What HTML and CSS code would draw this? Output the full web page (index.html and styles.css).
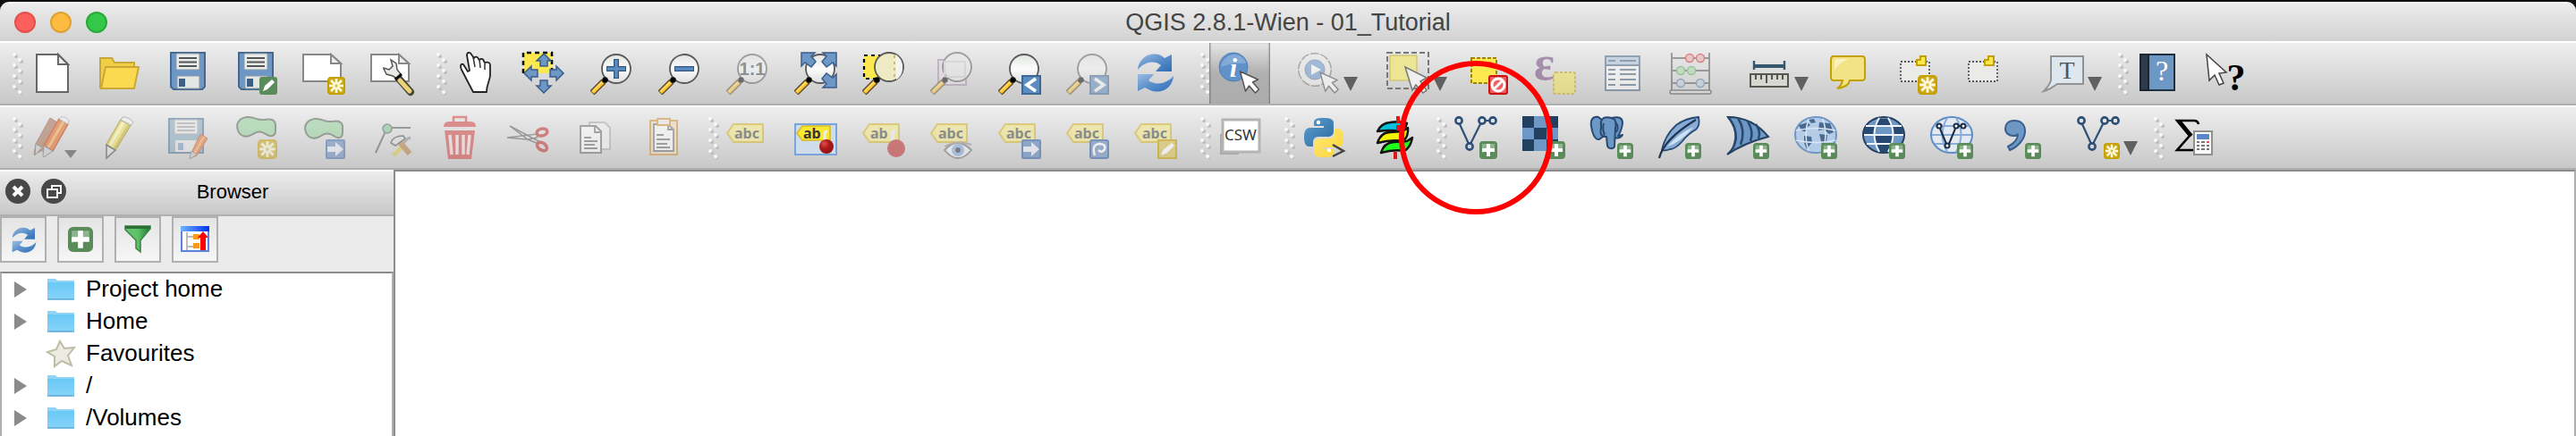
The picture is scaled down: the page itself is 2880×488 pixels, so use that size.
FILE: index.html
```html
<!DOCTYPE html>
<html lang="en">
<head>
<meta charset="utf-8">
<title>QGIS 2.8.1-Wien - 01_Tutorial</title>
<link rel="stylesheet" href="styles.css">
</head>
<body>
<svg class="defs" aria-hidden="true">
  <defs>
    <linearGradient id="gBlue" x1="0" y1="0" x2="1" y2="1"><stop offset="0" stop-color="#9dbce0"/><stop offset=".5" stop-color="#5a8fcb"/><stop offset="1" stop-color="#2f6cb4"/></linearGradient>
    <linearGradient id="gLens" x1="0" y1="0" x2="0" y2="1"><stop offset="0" stop-color="#e2e4e2"/><stop offset=".5" stop-color="#fbfcfb"/><stop offset="1" stop-color="#dedede"/></linearGradient>
    <linearGradient id="gPyB" x1="0" y1="0" x2="1" y2="1"><stop offset="0" stop-color="#5a9fd4"/><stop offset="1" stop-color="#306998"/></linearGradient>
    <linearGradient id="gPyY" x1="0" y1="0" x2="1" y2="1"><stop offset="0" stop-color="#ffe873"/><stop offset="1" stop-color="#ffd43b"/></linearGradient>
    <linearGradient id="gFolder" x1="0" y1="0" x2="0" y2="1"><stop offset="0" stop-color="#69c9f6"/><stop offset="1" stop-color="#86d3f9"/></linearGradient>
    <linearGradient id="gFunnel" x1="0" y1="0" x2="1" y2="0"><stop offset="0" stop-color="#6fbf74"/><stop offset=".5" stop-color="#5cc465"/><stop offset="1" stop-color="#1f7a33"/></linearGradient>
    <linearGradient id="gWin" x1="0" y1="0" x2="1" y2="0"><stop offset="0" stop-color="#6fb4ff"/><stop offset="1" stop-color="#0030f0"/></linearGradient>
    <radialGradient id="gBall" cx=".35" cy=".3" r=".8"><stop offset="0" stop-color="#e05050"/><stop offset=".4" stop-color="#b01c1c"/><stop offset="1" stop-color="#8c1212"/></radialGradient>
  </defs>
  <symbol id="grip" viewBox="0 0 12 48">
    <g fill="#bcbcbc"><circle cx="4" cy="5" r="2"/><circle cx="4" cy="17" r="2"/><circle cx="4" cy="29" r="2"/><circle cx="4" cy="41" r="2"/><circle cx="10" cy="11" r="2"/><circle cx="10" cy="23" r="2"/><circle cx="10" cy="35" r="2"/><circle cx="10" cy="47" r="1"/></g>
    <g fill="#f8f8f8"><circle cx="2" cy="3" r="2"/><circle cx="2" cy="15" r="2"/><circle cx="2" cy="27" r="2"/><circle cx="2" cy="39" r="2"/><circle cx="8" cy="9" r="2"/><circle cx="8" cy="21" r="2"/><circle cx="8" cy="33" r="2"/><circle cx="8" cy="45" r="2"/></g>
  </symbol>
  <symbol id="plus" viewBox="0 0 20 20"><rect x="1" y="1" width="18" height="18" rx="3" fill="#5a8c5a" stroke="#5a8c5a" stroke-width="2"/><path d="M3 3h14v5q-7 1-14 5z" fill="#8fb48f"/><path d="M10 3v14M3 10h14" stroke="#fff" stroke-width="4"/></symbol>
  <symbol id="star" viewBox="0 0 20 20"><rect x="1" y="1" width="18" height="18" rx="3" fill="#cfab1c" stroke="#c4a000" stroke-width="2"/><path d="M10 2v16M2 10h16M4 4l12 12M16 4L4 16" stroke="#fffbe0" stroke-width="2.6"/><circle cx="10" cy="10" r="3.6" fill="#fff8d0"/><circle cx="10" cy="10" r="1.6" fill="#d8b83a"/></symbol>
  <symbol id="go" viewBox="0 0 22 22"><rect x="1" y="1" width="20" height="20" rx="1" fill="#5f86bc" stroke="#3c64a4" stroke-width="2"/><path d="M2 8h9V3l9 8-9 8v-5H2z" fill="#fff" opacity=".85"/></symbol>
  <symbol id="disk" viewBox="0 0 48 48"><path d="M5 1h38v38l-3 3H8l-3-3z" fill="#6d97c4" stroke="#46688f" stroke-width="2"/><path d="M11 2h26v18H11z" fill="#e9ecea" stroke="#8c99a6" stroke-width="1"/><path d="M14 7h20M14 11.500h20M14 16h20" stroke="#555" stroke-width="2"/><path d="M12 27h25v14H12z" fill="#e4e6e4" stroke="#8c99a6" stroke-width="1"/><path d="M14 30h7v9h-7z" fill="#3d5f86"/></symbol>
  <symbol id="handle" viewBox="0 0 48 48"><path d="M2 46L15 33" stroke="#55482a" stroke-width="7"/><path d="M2.500 45.500L14 34" stroke="#fbc02d" stroke-width="4.500"/><path d="M3 44L13 34" stroke="#ffe27a" stroke-width="1.200"/><circle cx="16.500" cy="31.500" r="3.200" fill="#000"/></symbol>
  <symbol id="lens" viewBox="0 0 48 48"><circle cx="29" cy="19" r="16" fill="url(#gLens)" stroke="#5a5a5a" stroke-width="1.800"/><use href="#handle"/></symbol>
  <symbol id="cursor" viewBox="0 0 24 26"><path d="M1 1l20 9-6 3 7 8-4 4-7-8-4 6z" fill="#fff" stroke="#555" stroke-width="1.500" stroke-linejoin="round"/></symbol>
  <symbol id="tag" viewBox="0 0 48 48"><path d="M8 9h33v20H8L1 19z" fill="#f4e98c" stroke="#d6ba38" stroke-width="2"/></symbol>
  <symbol id="sync" viewBox="0 0 48 48"><path d="M4 20C5 7 17-1 30 4l4 3 8-4v19H24l6-7C22 9 12 11 4 20z" fill="url(#gBlue)"/><path d="M44 27C43 40 31 48 18 43l-6-3-8 4V25h18l-6 7c8 6 20 4 28-5z" fill="url(#gBlue)"/></symbol>
  <symbol id="vee" viewBox="0 0 48 48"><g fill="none" stroke="#2e5078" stroke-width="2.600"><path d="M6 9l10 22M18 31L29 9M34 5h6" stroke-width="2.200"/><circle cx="5" cy="5" r="3.600"/><circle cx="31" cy="5" r="3.600"/><circle cx="43" cy="5" r="3.600"/><circle cx="17" cy="34" r="3.600"/></g></symbol>
  <symbol id="arrows" viewBox="0 0 48 48"><g fill="#6d97c4" stroke="#3a5e8c" stroke-width="1.500"><path d="M1 1h15l-4 4 5 6-5 6-7-5-4 4z"/></g></symbol>
  <symbol id="folder" viewBox="0 0 32 26"><path d="M1 1h9l2 2h19v21H1z" fill="#8fd3f5"/><path d="M1 5h30v19H1z" fill="url(#gFolder)"/><path d="M1 24h30" stroke="#58a9d2" stroke-width="1.500"/></symbol>
</svg>

<header class="titlebar">
  <div class="lights">
    <button class="light red" aria-label="Close"></button>
    <button class="light amber" aria-label="Minimise"></button>
    <button class="light green" aria-label="Zoom window"></button>
  </div>
  <h1>QGIS 2.8.1-Wien - 01_Tutorial</h1>
</header>

<nav class="bar" aria-label="Main toolbars">
  <div class="group">
    <svg class="grip" aria-hidden="true"><use href="#grip"/></svg>
    <button class="tool" aria-label="New project"><svg viewBox="0 0 48 48"><path d="M7 3h24l11 11v31H7z" fill="#fff" stroke="#666" stroke-width="2"/><path d="M31 3v11h11z" fill="#eee" stroke="#666" stroke-width="2"/></svg></button>
    <button class="tool" aria-label="Open project"><svg viewBox="0 0 48 48"><path d="M2 41V7h13l3 5h22v8" fill="#f0cf45" stroke="#c9a838" stroke-width="2"/><path d="M8 17h37l-5 24H3z" fill="#fbd950" stroke="#c9a838" stroke-width="2"/></svg></button>
    <button class="tool" aria-label="Save project"><svg viewBox="0 0 48 48"><use href="#disk"/></svg></button>
    <button class="tool" aria-label="Save project as"><svg viewBox="0 0 48 48"><use href="#disk"/><rect x="28" y="28" width="20" height="20" rx="3" fill="#5a8c5a"/><path d="M32 44l2-6 8-7 3 3-8 8z" fill="#fff"/></svg></button>
    <button class="tool" aria-label="New print composer"><svg viewBox="0 0 48 48"><path d="M1 3h31l11 10v20H1z" fill="#fff" stroke="#888" stroke-width="2"/><path d="M32 3v10h11z" fill="#eee" stroke="#888" stroke-width="2"/><use href="#star" x="28" y="28" width="20" height="20"/></svg></button>
    <button class="tool" aria-label="Composer manager"><svg viewBox="0 0 48 48"><path d="M1 3h31l11 10v20H1z" fill="#fff" stroke="#888" stroke-width="2"/><path d="M32 3v10h11z" fill="#eee" stroke="#888" stroke-width="2"/><path d="M31 29L45 45" stroke="#4a4636" stroke-width="8" stroke-linecap="round"/><path d="M33 32L44 44" stroke="#ecd27a" stroke-width="5" stroke-linecap="round"/><path d="M15 19l3 6 7 2 5 3 4-5-4-5-1-7-6-4 2 7-4 4-6-2z" fill="#e8ebe8" stroke="#555" stroke-width="1.500"/><path d="M28 31l7-6" stroke="#111" stroke-width="3"/></svg></button>
  </div>
  <div class="group">
    <svg class="grip" aria-hidden="true"><use href="#grip"/></svg>
    <button class="tool" aria-label="Pan map"><svg viewBox="-2 0 48 48"><path d="M19 45L6 20c-2-4-1-7 2-6l5 8 2-1-3-17c0-4 4-4 5-1l3 4c1-2 4-2 5 1l1 1c2-2 5-1 5 2l2 1c2-1 5 0 5 3v11c0 6-4 10-4 19z" fill="#fff" stroke="#222" stroke-width="1.800" stroke-linejoin="round"/><path d="M19 6l2 11M26 8l1 10M32 11v9" stroke="#333" stroke-width="1.500" fill="none"/></svg></button>
    <button class="tool" aria-label="Pan map to selection"><svg viewBox="0 0 48 48"><path d="M1 1h32v23H1z" fill="#fce94f"/><path d="M1 24V1h32v22" fill="none" stroke="#000" stroke-width="2.500" stroke-dasharray="5 4"/><path d="M24 2l8 8h-4v6h-8v-6h-4zM24 46l-8-8h4v-6h8v6h4zM2 24l8-8v4h7v8h-7v4zM46 24l-8-8v4h-7v8h7v4z" fill="#6d97c4" stroke="#3a5e8c" stroke-width="1.500"/></svg></button>
    <button class="tool" aria-label="Zoom in"><svg viewBox="0 0 48 48"><use href="#lens"/><path d="M29 8v22M18 19h22" stroke="#2f5580" stroke-width="6"/><path d="M29 9v20M19 19h20" stroke="#5d8cc0" stroke-width="3.500"/></svg></button>
    <button class="tool" aria-label="Zoom out"><svg viewBox="0 0 48 48"><use href="#lens"/><path d="M18 19h22" stroke="#2f5580" stroke-width="6"/><path d="M19 19h20" stroke="#5d8cc0" stroke-width="3.500"/></svg></button>
    <button class="tool off" aria-label="Zoom to native resolution" disabled><svg viewBox="0 0 48 48"><use href="#lens"/><text class="ratio" x="29" y="26" text-anchor="middle">1:1</text></svg></button>
    <button class="tool" aria-label="Zoom full"><svg viewBox="0 0 48 48"><use href="#lens"/><use href="#arrows" x="7"/><use href="#arrows" transform="matrix(-1 0 0 1 48 0)"/><use href="#arrows" transform="matrix(-1 0 0 -1 48 41)"/></svg></button>
    <button class="tool" aria-label="Zoom to selection"><svg viewBox="0 0 48 48"><path d="M2 4h34v26H2z" fill="#fce94f"/><path d="M2 4h34v26H2z" fill="none" stroke="#000" stroke-width="2.200" stroke-dasharray="4 4"/><circle cx="30" cy="17" r="16" fill="#eeeac4" stroke="#5a5a5a" stroke-width="1.800"/><path d="M36 4v26" stroke="#c8bd70" stroke-width="2" stroke-dasharray="3 4"/><path d="M37 3c10 5 11 23 1 28z" fill="#f3f4f2"/><use href="#handle"/></svg></button>
    <button class="tool off" aria-label="Zoom to layer" disabled><svg viewBox="0 0 48 48"><path d="M9 9h31v28H9z" fill="#e4dbe4" stroke="#a08ca8" stroke-width="2"/><circle cx="30" cy="17" r="16" fill="#e9e9e9" stroke="#5a5a5a" stroke-width="1.800"/><path d="M16 11h23v17H16z" fill="none" stroke="#ccc" stroke-width="2"/><use href="#handle"/></svg></button>
    <button class="tool" aria-label="Zoom last"><svg viewBox="0 0 48 48"><use href="#lens"/><rect x="27" y="27" width="20" height="20" fill="#5d8cc0" stroke="#3f6794" stroke-width="2"/><path d="M42 30l-10 7 10 7" fill="none" stroke="#fff" stroke-width="3.500"/></svg></button>
    <button class="tool off" aria-label="Zoom next" disabled><svg viewBox="0 0 48 48"><use href="#lens"/><rect x="27" y="27" width="20" height="20" fill="#5d8cc0" stroke="#3f6794" stroke-width="2"/><path d="M32 30l10 7-10 7" fill="none" stroke="#fff" stroke-width="3.500"/></svg></button>
    <button class="tool" aria-label="Refresh"><svg viewBox="0 0 48 48"><use href="#sync"/></svg></button>
  </div>
  <div class="group">
    <svg class="grip" aria-hidden="true"><use href="#grip"/></svg>
    <button class="tool pressed" aria-label="Identify features" aria-pressed="true"><svg viewBox="0 0 48 48"><circle cx="17" cy="17" r="16" fill="#6091c8" stroke="#4c7eb8"/><path d="M3 17C4 8 12 3 18 3s13 5 13 10c-10-1-19 0-28 4z" fill="#84abd8"/><text class="info" x="17" y="28" text-anchor="middle">i</text><use href="#cursor" x="23" y="21" width="25" height="26"/></svg></button>
    <button class="tool menu" aria-label="Run feature action"><svg class="faded" viewBox="0 0 48 48"><circle cx="20" cy="20" r="17" fill="#f0f0f0" stroke="#777" stroke-width="4" stroke-dasharray="9 1.700"/><circle cx="20" cy="20" r="17.500" fill="#ececec"/><circle cx="20" cy="20" r="11" fill="#6d9bd2" stroke="#5a7ba0"/><path d="M16 14l11 6-11 6z" fill="#fff"/><use href="#cursor" x="25" y="22" width="23" height="25"/></svg><span class="caret"></span></button>
    <button class="tool menu" aria-label="Select features"><svg viewBox="0 0 48 48"><path d="M4 4h30v28H4z" fill="#ede596" stroke="#c9b94c"/><path d="M1 1h46v40H1z" fill="none" stroke="#777" stroke-width="2" stroke-dasharray="6 3"/><path d="M21 17l24 12-7 4 7 10-4 3-8-9-4 6z" fill="#efefef" stroke="#777" stroke-width="1.500"/></svg><span class="caret"></span></button>
    <button class="tool" aria-label="Deselect features"><svg viewBox="0 0 48 48"><path d="M7 7h28v28H7z" fill="#fce94f" stroke="#a08500" stroke-width="2" stroke-dasharray="4 2"/><rect x="27" y="27" width="20" height="20" rx="2" fill="#ef6060" stroke="#cc1111" stroke-width="2"/><circle cx="37" cy="37" r="7" fill="none" stroke="#fff" stroke-width="3"/><path d="M32 42l10-10" stroke="#fff" stroke-width="3"/></svg></button>
    <button class="tool off" aria-label="Select by expression" disabled><svg viewBox="0 0 48 48"><text class="eps" x="1" y="31">ε</text><rect x="23" y="23" width="24" height="24" rx="2" fill="#f5e54e" stroke="#c4a000" stroke-width="2" stroke-dasharray="3 2"/></svg></button>
    <button class="tool off" aria-label="Open attribute table" disabled><svg viewBox="0 0 48 48"><path d="M5 5h38v38H5z" fill="#fff" stroke="#42607c" stroke-width="2"/><path d="M5 5h38v10H5z" fill="#aac4e0" stroke="#42607c" stroke-width="2"/><path d="M8 10h8M21 10h18M8 20h8M21 20h18M8 25h8M21 25h18M8 31h8M21 31h18M8 37h8M21 37h18" stroke="#42607c" stroke-width="2"/></svg></button>
    <button class="tool off" aria-label="Field calculator" disabled><svg viewBox="0 0 48 48"><path d="M3 1v42M45 1v42M3 7h42M3 21h42M3 35h42" stroke="#555" stroke-width="2"/><rect x="1" y="43" width="46" height="4" rx="2" fill="#ddd" stroke="#444" stroke-width="1.500"/><g stroke-width="1.500"><g fill="#eaa" stroke="#c22"><circle cx="23" cy="7" r="4.500"/><circle cx="35" cy="7" r="4.500"/></g><g fill="#ada" stroke="#5a5"><circle cx="13" cy="21" r="4.500"/><circle cx="25" cy="21" r="4.500"/></g><g fill="#bcd" stroke="#579"><circle cx="13" cy="35" r="4.500"/><circle cx="35" cy="35" r="4.500"/></g></g></svg></button>
    <button class="tool menu" aria-label="Measure"><svg viewBox="0 0 48 48"><path d="M7 16h34M7 10v10M41 10v10" stroke="#36566e" stroke-width="2.400"/><path d="M7 16h34" stroke="#36566e" stroke-width="4"/><rect x="3" y="25" width="42" height="14" fill="#d6d8d0" stroke="#565850" stroke-width="2"/><path d="M9 26v5M15 26v5M21 26v9M27 26v5M33 26v5M39 26v5" stroke="#444" stroke-width="1.800"/></svg><span class="caret"></span></button>
    <button class="tool" aria-label="Map tips"><svg viewBox="0 0 48 48"><path d="M8 5h32q3 0 3 4v19q0 4-3 4H26q-1 7-14 9 5-3 6-9H8q-3 0-3-4V9q0-4 3-4z" fill="#f2e486" stroke="#c4a000" stroke-width="2"/><path d="M9 20V10q0-2 4-2h12q-10 3-16 12z" fill="#faf3c0"/></svg></button>
    <button class="tool" aria-label="New bookmark"><svg viewBox="0 0 48 48"><path d="M7 11h32v22H7z" fill="#eaeae8" stroke="#555" stroke-width="1.800" stroke-dasharray="2 2"/><path d="M29 5h6v10H25V9h4z" fill="#fce94f" stroke="#c4a000" stroke-width="2"/><use href="#star" x="26" y="26" width="22" height="22"/></svg></button>
    <button class="tool" aria-label="Show bookmarks"><svg viewBox="0 0 48 48"><path d="M7 11h32v22H7z" fill="#eaeae8" stroke="#555" stroke-width="1.800" stroke-dasharray="2 2"/><path d="M29 5h6v10H25V9h4z" fill="#fce94f" stroke="#c4a000" stroke-width="2"/></svg></button>
    <button class="tool menu" aria-label="Text annotation"><svg viewBox="0 0 48 48"><path d="M11 5h36v31H18Q10 42 3 44q6-6 8-12z" fill="#dfe7ee" stroke="#929292" stroke-width="2"/><text class="anno" x="29" y="30" text-anchor="middle">T</text></svg><span class="caret"></span></button>
  </div>
  <div class="group">
    <svg class="grip" aria-hidden="true"><use href="#grip"/></svg>
    <button class="tool" aria-label="Help contents"><svg viewBox="0 0 48 48"><path d="M5 3h38v40H5z" fill="#6d97c4" stroke="#1f2f42" stroke-width="2"/><path d="M5 3h9v40H5z" fill="#2d3c4c" stroke="#1f2530" stroke-width="2"/><text class="help" x="29" y="32" text-anchor="middle">?</text></svg></button>
    <button class="tool" aria-label="What's this"><svg viewBox="0 0 48 48"><path d="M3 3l22 20-8 1 5 11-5 2-5-11-6 6z" fill="#fff" stroke="#444" stroke-width="1.500"/><text class="what" x="36" y="43" text-anchor="middle">?</text></svg></button>
  </div>
</nav>

<nav class="bar" aria-label="Editing and layer toolbars">
  <div class="group">
    <svg class="grip" aria-hidden="true"><use href="#grip"/></svg>
    <button class="tool dim" aria-label="Current edits" disabled><svg viewBox="0 0 48 48"><path d="M22 2l8 5L14 38 4 43l2-12z" fill="#b07a60" stroke="#8a6a60"/><path d="M32 3l10 6-17 30-10-6z" fill="#e87030" stroke="#b84818" stroke-width="1.500"/><path d="M37 6L20 35" stroke="#f0b060" stroke-width="3"/><path d="M32 3l2-2q6-1 9 4l-1 4z" fill="#eee" stroke="#aaa"/><path d="M15 33l10 6-10 7-1-2zM6 31l7 4-8 9z" fill="#ccc" stroke="#777"/><path d="M38 38h14l-7 9z" fill="#555"/></svg></button>
    <button class="tool dim" aria-label="Toggle editing" disabled><svg viewBox="0 0 48 48"><path d="M25 4l11 6-17 28-10-6z" fill="#f0e060" stroke="#a89830" stroke-width="1.500"/><path d="M28 7L13 33" stroke="#fdf8c0" stroke-width="3"/><path d="M34 9L18 36" stroke="#c8b838" stroke-width="2"/><path d="M25 4l2-3q8 0 12 6l-3 3z" fill="#f4f4f4" stroke="#999"/><path d="M9 32l10 6-10 9z" fill="#ddd" stroke="#555" stroke-width="1.500"/></svg></button>
    <button class="tool off" aria-label="Save layer edits" disabled><svg viewBox="0 0 48 48"><path d="M3 3h38v38H3z" fill="#80a8c0" stroke="#46688f" stroke-width="2"/><path d="M9 4h26v16H9z" fill="#e9ecea" stroke="#999"/><path d="M12 8h20M12 12h20M12 16h20" stroke="#888" stroke-width="1.500"/><path d="M10 27h24v13H10z" fill="#e4e6e4"/><path d="M13 30h6v8h-6z" fill="#6d97c4"/><path d="M38 20l8 5-12 19-7 3 2-8z" fill="#e87030" stroke="#b84818"/><path d="M42 23L31 42" stroke="#f0b060" stroke-width="2"/><path d="M28 39l6 4-8 5z" fill="#ccc" stroke="#777"/></svg></button>
    <button class="tool off" aria-label="Add feature" disabled><svg viewBox="0 0 48 48"><path d="M14 1C22 0 25 5 32 4c4 0 7-1 10 0 5 2 4 6 4 12 0 8-7 7-11 4-6-4-10-3-14 0-6 4-14 4-17-4C1 8 6 2 14 1z" fill="#92d49a" stroke="#4c5c4c" stroke-width="2"/><use href="#star" x="26" y="26" width="22" height="22"/></svg></button>
    <button class="tool off" aria-label="Move feature" disabled><svg viewBox="0 0 48 48"><path d="M14 3c8-1 11 4 18 3 4 0 6-1 9 0 5 2 4 6 4 12 0 8-6 7-10 4-6-4-10-3-14 0-6 4-14 4-17-4C1 10 6 4 14 3z" fill="#92d49a" stroke="#4c5c4c" stroke-width="2"/><use href="#go" x="26" y="26" width="22" height="22"/></svg></button>
    <button class="tool off" aria-label="Node tool" disabled><svg viewBox="0 0 48 48"><path d="M24 13h21M17 17L6 41" stroke="#555" stroke-width="2"/><circle cx="19" cy="14" r="5" fill="#7cc48c" stroke="#555" stroke-width="1.500"/><path d="M26 44L36 34" stroke="#d8c840" stroke-width="5"/><path d="M34 33l4-4 4-4 3-1" fill="none" stroke="#888" stroke-width="3"/><path d="M32 28L44 42" stroke="#b87830" stroke-width="6"/><path d="M23 30q2-8 14-8l2 3-11 8z" fill="#ddd" stroke="#444" stroke-width="1.500"/></svg></button>
    <button class="tool off" aria-label="Delete selected" disabled><svg viewBox="0 0 48 48"><path d="M17 6V1h14v5" fill="none" stroke="#d23a3a" stroke-width="2.500"/><path d="M6 12q0-6 6-6h24q6 0 6 6zM7 16h34l-4 32H11z" fill="#d23a3a"/><path d="M13 21l2 22M21 21v22M28 21v22M35 21l-2 22" stroke="#f4dcdc" stroke-width="3.500"/></svg></button>
    <button class="tool off" aria-label="Cut features" disabled><svg viewBox="0 0 48 48"><path d="M4 11l32 17-2 2-10-4zM1 24l34-4-1 4-10 2z" fill="#eee" stroke="#555" stroke-width="1.500"/><g fill="none" stroke="#c02020" stroke-width="3.500"><ellipse cx="40" cy="18" rx="6" ry="4" transform="rotate(-12 40 18)"/><ellipse cx="40" cy="34" rx="6" ry="4" transform="rotate(35 40 34)"/></g></svg></button>
    <button class="tool off" aria-label="Copy features" disabled><svg viewBox="0 0 48 48"><path d="M17 7h17l6 6v24H17z" fill="#f4f4f4" stroke="#aaa" stroke-width="2"/><path d="M7 11h17l6 6v24H7z" fill="#fff" stroke="#666" stroke-width="2"/><path d="M23 11v7h7M11 24h8M11 28h15M11 32h12M11 36h15" fill="none" stroke="#666" stroke-width="1.800"/></svg></button>
    <button class="tool off" aria-label="Paste features" disabled><svg viewBox="0 0 48 48"><path d="M9 5h30v38H9z" fill="#f0dcc0" stroke="#d08c28" stroke-width="2"/><path d="M13 9h16l6 6v24H13z" fill="#fff" stroke="#666" stroke-width="1.800"/><path d="M29 9v6h6M16 21h8M16 26h15M16 31h12M16 35h15" fill="none" stroke="#666" stroke-width="1.800"/><path d="M17 3h14v7H17z" fill="#eee" stroke="#d08c28" stroke-width="2"/></svg></button>
  </div>
  <div class="group">
    <svg class="grip" aria-hidden="true"><use href="#grip"/></svg>
    <button class="tool dim" aria-label="Layer labeling options"><svg viewBox="0 0 48 48"><use href="#tag"/><text class="abc" x="9" y="25">abc</text></svg></button>
    <button class="tool" aria-label="Highlight pinned labels"><svg viewBox="0 0 48 48"><path d="M1 9h46v34H1z" fill="#cfdcea" stroke="#7aa5dc" stroke-width="2"/><path d="M9 11h31v16H9l-6-8z" fill="#fbe832" stroke="#d6ba20" stroke-width="1.500"/><text class="abc strong" x="10" y="25">ab</text><path d="M34 28v-8q0-3 3-3" fill="none" stroke="#eee" stroke-width="3"/><circle cx="36" cy="34" r="8" fill="url(#gBall)"/></svg></button>
    <button class="tool dim" aria-label="Pin labels"><svg viewBox="0 0 48 48"><use href="#tag"/><text class="abc" x="9" y="25">ab</text><path d="M34 28v-8q0-3 3-3" fill="none" stroke="#eee" stroke-width="4"/><circle cx="38" cy="36" r="10" fill="#c03a3a"/></svg></button>
    <button class="tool dim" aria-label="Show hidden labels"><svg viewBox="0 0 48 48"><use href="#tag"/><text class="abc" x="9" y="25">abc</text><path d="M16 38q14-16 30 0-15 18-30 0z" fill="#eee" stroke="#777" stroke-width="1.800"/><path d="M16 34q14-8 30-2" fill="none" stroke="#999" stroke-width="2"/><circle cx="31" cy="38" r="7" fill="#8ab0e0"/><circle cx="31" cy="38" r="3" fill="#445"/></svg></button>
    <button class="tool dim" aria-label="Move label"><svg viewBox="0 0 48 48"><use href="#tag"/><text class="abc" x="9" y="25">abc</text><use href="#go" x="26" y="26" width="22" height="22"/></svg></button>
    <button class="tool dim" aria-label="Rotate label"><svg viewBox="0 0 48 48"><use href="#tag"/><text class="abc" x="9" y="25">abc</text><rect x="27" y="27" width="20" height="20" rx="2" fill="#6f91c2" stroke="#3c64a4" stroke-width="2"/><path d="M32 44q-4-12 5-13 8 0 6 6-3 5-7 1" fill="none" stroke="#fff" stroke-width="2.500"/></svg></button>
    <button class="tool dim" aria-label="Change label"><svg viewBox="0 0 48 48"><use href="#tag"/><text class="abc" x="9" y="25">abc</text><rect x="27" y="27" width="20" height="20" fill="#dcc458" stroke="#c4a000" stroke-width="2"/><path d="M30 44l2-6 10-8 3 3-8 8z" fill="#fff"/></svg></button>
  </div>
  <div class="group">
    <svg class="grip" aria-hidden="true"><use href="#grip"/></svg>
    <button class="tool" aria-label="Metasearch catalogue"><svg viewBox="0 0 48 48"><path d="M3 20v22h20" fill="none" stroke="#aaa" stroke-width="2"/><path d="M5 4h41v36H5z" fill="#fff" stroke="#b4b4b4" stroke-width="3"/><text class="csw" x="25" y="27" text-anchor="middle">CSW</text></svg></button>
  </div>
  <div class="group">
    <svg class="grip" aria-hidden="true"><use href="#grip"/></svg>
    <button class="tool" aria-label="Python console"><svg viewBox="0 0 48 48"><path d="M23 2c8 0 12 1 12 6v9c0 4-3 6-7 6H18c-4 0-6 3-6 6v5H8c-5 0-6-5-6-11s2-10 7-10h15v-2H13V7c0-4 4-5 10-5z" fill="url(#gPyB)"/><path d="M25 46c-8 0-12-1-12-6v-9c0-4 3-6 7-6h10c4 0 6-3 6-6v-5h4c5 0 6 5 6 11s-2 10-7 10H24v2h11v4c0 4-4 5-10 5z" fill="url(#gPyY)"/><circle cx="18" cy="7" r="2.200" fill="#fff"/><circle cx="30" cy="38" r="2.200" fill="#fff"/><path d="M34 32l12 7-12 6" fill="none" stroke="#444" stroke-width="2.500"/></svg></button>
    <button class="tool" aria-label="OpenLayers plugin"><svg viewBox="0 0 48 48"><path d="M28 40v8" stroke="#e01818" stroke-width="4"/><g stroke="#111" stroke-width="2.500" stroke-linejoin="round"><path d="M12 41q3-11 14-12l15-1 6-4q-2 11-9 15-12-2-26 2z" fill="#1aff1a"/><path d="M8 30q4-12 14-12l14-1 6-4q1 9-5 15-14-2-29 2z" fill="#f4f400"/><path d="M8 17Q12 8 22 7q12-2 19 1-2 7-7 9-12-2-26 0z" fill="#00c0dc"/></g><path d="M31 0v8M31 10v6" stroke="#e01818" stroke-width="4"/></svg></button>
  </div>
  <div class="group">
    <svg class="grip" aria-hidden="true"><use href="#grip"/></svg>
    <button class="tool ringed" aria-label="Add vector layer"><svg viewBox="0 0 48 48"><use href="#vee"/><use href="#plus" x="28" y="28" width="20" height="20"/></svg></button>
    <button class="tool" aria-label="Add raster layer"><svg viewBox="0 0 48 48"><path d="M0 0h40v39H0z" fill="#6d97c4"/><path d="M0 0h13v13H0zM27 0h13v13H27zM13 13h14v13H13zM0 26h13v13H0zM27 26h13v13H27z" fill="#22405f"/><use href="#plus" x="28" y="28" width="20" height="20"/></svg></button>
    <button class="tool" aria-label="Add PostGIS layer"><svg viewBox="0 0 48 48"><g fill="#6d97c4" stroke="#284a72" stroke-width="2" stroke-linejoin="round"><path d="M24 2q12-3 12 6-1 8-5 14l5-1q-3 5-9 3z"/><path d="M9 1C2 0 0 5 1 11c1 8 4 16 9 15l4-3V5z"/><path d="M15 2q5-2 11 1c3 2 3 6 2 10l-1 21c-1 3-7 3-8-1l-1-10c-7 0-7-4-6-10 0-5-1-8 3-11z"/><path d="M15 8q-2 6 1 13M28 7q5 5 1 11" fill="none"/></g><use href="#plus" x="30" y="30" width="18" height="18"/></svg></button>
    <button class="tool" aria-label="Add SpatiaLite layer"><svg viewBox="0 0 48 48"><path d="M4 38Q7 22 20 10 31 2 45 1q2 10-3 14-9 5-15 13-8 9-14 9-4 2-9 1z" fill="#85abd6" stroke="#284a72" stroke-width="1.800"/><path d="M10 34q14-4 30-22-16 6-30 22z" fill="#cfe0f2"/><path d="M1 47Q6 26 42 4" fill="none" stroke="#203450" stroke-width="2.200"/><use href="#plus" x="30" y="30" width="18" height="18"/></svg></button>
    <button class="tool" aria-label="Add MSSQL layer"><svg viewBox="0 0 48 48"><path d="M2 1q27 0 45 22Q20 30 1 43q9-8 10-18Q11 12 2 1z" fill="#6d97c4" stroke="#22405f" stroke-width="2"/><path d="M13 2q9 14 3 30M24 6q7 11 3 22M33 9q6 8 3 16M2 1q14 16 5 36" fill="none" stroke="#284a72" stroke-width="2.500"/><use href="#plus" x="30" y="30" width="18" height="18"/></svg></button>
    <button class="tool" aria-label="Add WMS layer"><svg viewBox="0 0 48 48"><ellipse cx="24" cy="21" rx="23" ry="20" fill="#b4cce8" stroke="#6d97c4" stroke-width="2"/><path d="M5 10l10-3 3 3-5 3 1 5-6-2zM28 7l12 1 4 10-5 2-6-5-6 1zM11 22l8 1 1 6-6 8-3-7zM28 20l9 1-1 8-5 3zM16 4l6-1 2 4-5 1z" fill="#284a72" opacity=".75"/><path d="M2 16q22-5 44 0M2 27q22 5 44 0M16 3q-6 18 0 36M32 3q6 18 0 36" fill="none" stroke="#dbe7f5" stroke-width="1.500"/><use href="#plus" x="30" y="30" width="18" height="18"/></svg></button>
    <button class="tool" aria-label="Add WCS layer"><svg viewBox="0 0 48 48"><ellipse cx="24" cy="21" rx="23" ry="20" fill="#6d97c4" stroke="#22405f" stroke-width="2"/><path d="M18 3h12l4 7H14zM2 20q0-6 3-9h9v9zM14 21h20v9H14zM34 11h9q3 4 3 9H34zM16 31h16l-3 9H19z" fill="#284a72"/><path d="M14 11h20v9H14z" fill="#6d97c4"/><path d="M4 11h40M2 21h44M5 31h38M19 2Q8 20 19 40M29 2q11 18 0 38" fill="none" stroke="#f0f5fb" stroke-width="2"/><use href="#plus" x="30" y="30" width="18" height="18"/></svg></button>
    <button class="tool" aria-label="Add WFS layer"><svg viewBox="0 0 48 48"><ellipse cx="24" cy="21" rx="23" ry="20" fill="#e4eaf2" stroke="#5d8cc8" stroke-width="2"/><path d="M4 11h40M2 21h44M5 31h38M19 2Q8 20 19 40M29 2q11 18 0 38" fill="none" stroke="#88abd8" stroke-width="2"/><g fill="#fff" stroke="#1a2c44" stroke-width="2"><path d="M11 14l7 17M21 31l7-17M31 11h4"/><circle cx="10" cy="11" r="2.500"/><circle cx="29" cy="11" r="2.500"/><circle cx="37" cy="11" r="2.500"/><circle cx="19" cy="33" r="2.500"/></g><use href="#plus" x="30" y="30" width="18" height="18"/></svg></button>
    <button class="tool" aria-label="Add delimited text layer"><svg viewBox="0 0 48 48"><path d="M18 5C11 5 8 9 8 14c0 5 4 8 9 8 2 0 4 0 5-2 0 6-5 11-11 14l2 4C21 35 30 26 30 17 30 9 25 5 18 5z" fill="#6d97c4" stroke="#3a5e8c" stroke-width="2"/><use href="#plus" x="30" y="30" width="18" height="18"/></svg></button>
    <button class="tool menu" aria-label="New vector layer"><svg viewBox="0 0 48 48"><use href="#vee"/><use href="#star" x="30" y="30" width="18" height="18"/></svg><span class="caret"></span></button>
  </div>
  <div class="group">
    <svg class="grip" aria-hidden="true"><use href="#grip"/></svg>
    <button class="tool" aria-label="Statistics panel"><svg viewBox="0 0 48 48"><path d="M30 9q-1-4-5-4H6l14 17L6 38h18" fill="none" stroke="#000" stroke-width="2.600"/><path d="M8 5l14 17" stroke="#000" stroke-width="4"/><rect x="25" y="17" width="20" height="26" fill="#fafafa" stroke="#909090" stroke-width="2"/><path d="M28 20h14v6H28z" fill="#5b86cc"/><path d="M28 29h3M33 29h4M28 33h3M33 33h4M39 33h3M28 37h3M33 37h4M39 37h3" stroke="#777" stroke-width="2"/><path d="M39 29h3" stroke="#f44" stroke-width="2"/></svg></button>
  </div>
</nav>

<main class="work">
  <aside class="panel">
    <div class="panel-head">
      <button class="round" aria-label="Close panel"><svg viewBox="0 0 28 28"><circle cx="14" cy="14" r="14" fill="#484848"/><path d="M9 9l10 10M19 9L9 19" stroke="#fff" stroke-width="4"/></svg></button>
      <button class="round" aria-label="Float panel"><svg viewBox="0 0 28 28"><circle cx="14" cy="14" r="14" fill="#484848"/><path d="M12 11V8h10v8h-3" fill="none" stroke="#fff" stroke-width="2"/><path d="M7 12h11v9H7z" fill="#484848" stroke="#fff" stroke-width="2"/></svg></button>
      <h2>Browser</h2>
    </div>
    <div class="panel-tools">
      <button class="small" aria-label="Refresh browser"><svg viewBox="0 0 32 32"><use href="#sync" x="1" y="1" width="32" height="32"/></svg></button>
      <button class="small" aria-label="Add selected layers"><svg viewBox="0 0 32 32"><use href="#plus" x="2" y="2" width="28" height="28"/></svg></button>
      <button class="small" aria-label="Filter browser"><svg viewBox="0 0 32 32"><path d="M2 1h28v3L19 17v13l-5-4v-9L2 5z" fill="url(#gFunnel)" stroke="#3f8048" stroke-width="1.500"/><path d="M2 1h28v3H2z" fill="#2f7038"/></svg></button>
      <button class="small" aria-label="Collapse all"><svg viewBox="0 0 32 32"><path d="M1 2h30v27H1z" fill="#fff" stroke="#5b83dd" stroke-width="2"/><path d="M0 1h32v6H0z" fill="url(#gWin)"/><path d="M7 8v20M7 13h7M7 24h7" stroke="#bbb" stroke-width="2" fill="none"/><path d="M14 10h7v6h-7zM14 20h7v6h-7z" fill="#f79a1c"/><path d="M25 7l6 7h-3v14h-6V14h-3z" fill="#f00"/></svg></button>
    </div>
    <ul class="tree">
      <li><span class="twist"></span><svg viewBox="0 0 32 26"><use href="#folder"/></svg><span>Project home</span></li>
      <li><span class="twist"></span><svg viewBox="0 0 32 26"><use href="#folder"/></svg><span>Home</span></li>
      <li><span class="twist none"></span><svg class="fav" viewBox="0 0 32 32"><path d="M15 2l5 8 11-1-7 9 4 11-11-5-8 6v-11L1 14l10-3z" fill="#ebebe2" stroke="#bdbda6" stroke-width="2"/></svg><span>Favourites</span></li>
      <li><span class="twist"></span><svg viewBox="0 0 32 26"><use href="#folder"/></svg><span>/</span></li>
      <li><span class="twist"></span><svg viewBox="0 0 32 26"><use href="#folder"/></svg><span>/Volumes</span></li>
    </ul>
  </aside>
  <section class="canvas" aria-label="Map canvas"></section>
</main>
</body>
</html>
```

FILE: styles.css
```css
*, *::after { box-sizing: border-box; }

body {
  margin: 0;
  min-height: 100vh;
  display: flex;
  flex-direction: column;
  background: #111;
  color: #000;
  font-family: "Liberation Sans", Helvetica, Arial, sans-serif;
  font-size: 26px;
}

button {
  padding: 0;
  border: 0;
  background: none;
  font: inherit;
}

svg { display: block; overflow: visible; }
.defs { position: absolute; width: 0; height: 0; }

/* Title bar */
.titlebar {
  display: grid;
  grid-template-columns: 1fr auto 1fr;
  align-items: center;
  height: 44px;
  margin-top: 2px;
  padding: 0 16px;
  border-top: 2px solid #f6f6f6;
  border-radius: 10px 10px 0 0;
  background: linear-gradient(#ececec, #d2d2d2);
}
.titlebar h1 {
  margin: 0;
  color: #444;
  font-size: 27px;
  font-weight: 400;
  line-height: 32px;
}
.lights { display: flex; gap: 16px; }
.light { width: 24px; height: 24px; border: 2px solid; border-radius: 50%; }
.red { background: #fc605c; border-color: #e3504b; }
.amber { background: #fdbc40; border-color: #dfa033; }
.green { background: #34c84a; border-color: #27aa35; }

/* Toolbars */
.bar {
  display: flex;
  border-top: 2px solid #fff;
  border-bottom: 2px solid #b0b0b0;
  background: linear-gradient(#eee, #c8c8c8);
}
.group { display: flex; align-items: center; }
.grip { width: 12px; height: 48px; margin: 0 -2px 0 16px; }
.group:first-child .grip { margin-left: 14px; }

.tool {
  position: relative;
  display: flex;
  align-items: center;
  gap: 4px;
  height: 68px;
  padding: 0 10px;
}
.tool + .tool { margin-left: 8px; }
.tool > svg { width: 48px; height: 48px; flex: none; }
.menu { padding: 0 2px 0 22px; }
.off > svg { opacity: .5; }
.dim > svg { opacity: .6; }
.faded { opacity: .55; }

.pressed {
  background: linear-gradient(#e6e6e6, #b0b0b0 50%, #acacac);
  box-shadow: inset 2px 0 2px -1px #777, inset -2px 0 2px -1px #777;
}
.caret {
  width: 16px;
  height: 16px;
  margin-top: 24px;
  background: #606060;
  clip-path: polygon(0 0, 100% 0, 50% 100%);
}
.ringed::after {
  content: "";
  position: absolute;
  z-index: 2;
  top: 50%;
  left: 50%;
  width: 172px;
  height: 172px;
  border: 6px solid #f00;
  border-radius: 50%;
  transform: translate(-50%, -50%);
  pointer-events: none;
}

.ratio { font: bold 20px "Liberation Sans", sans-serif; fill: #444; }
.info { font: italic bold 30px "Liberation Serif", serif; fill: #fff; }
.eps { font: bold 54px "Liberation Serif", serif; fill: #6a3f78; }
.anno { font: 28px "Liberation Serif", serif; fill: #555; }
.help { font: 32px "Liberation Serif", serif; fill: #fff; }
.what { font: bold 42px "Liberation Serif", serif; fill: #000; }
.abc { font: bold 16px "Noto Sans", sans-serif; fill: #555; }
.strong { fill: #333; }
.csw { font: 17px "Noto Sans", sans-serif; fill: #333; }

/* Work area */
.work { display: flex; flex: 1; background: #fff; }
.panel {
  display: flex;
  flex-direction: column;
  flex: none;
  width: 440px;
  background: #ebebeb;
}
.panel-head {
  display: grid;
  grid-template-columns: 28px 28px 1fr;
  align-items: center;
  gap: 12px;
  height: 52px;
  padding: 0 6px;
  border-top: 2px solid #fff;
  border-bottom: 2px solid #b0b0b0;
  background: linear-gradient(#ececec, #c8c8c8);
}
.panel-head h2 {
  margin: 0;
  padding-bottom: 2px;
  font-size: 22px;
  font-weight: 400;
  line-height: 28px;
  text-align: center;
}
.round { width: 28px; height: 28px; margin-bottom: 4px; }
.panel-tools { display: flex; gap: 12px; padding-bottom: 10px; }
.small {
  display: grid;
  place-items: center;
  width: 52px;
  height: 52px;
  border: 2px solid #b0b0b0;
  background: linear-gradient(#e4e4e4, #f6f6f6);
}
.small svg { width: 32px; height: 32px; }

.tree {
  flex: 1;
  margin: 0;
  padding: 0;
  list-style: none;
  border: solid #b0b0b0;
  border-width: 2px 2px 0;
  border-top-color: #8c8c8c;
  background: #fff;
}
.tree li {
  display: flex;
  align-items: center;
  height: 36px;
  padding-left: 14px;
  line-height: 32px;
}
.tree li > span:last-child { padding-bottom: 2px; }
.tree svg { width: 32px; height: 26px; margin: 0 12px 0 22px; }
.tree .fav { height: 32px; }
.twist {
  width: 14px;
  height: 18px;
  background: #8a8a8a;
  clip-path: polygon(0 0, 100% 50%, 0 100%);
}
.none { background: none; }

.canvas {
  flex: 1;
  border: solid #8c8c8c;
  border-width: 2px 2px 0;
  border-right-color: #b0b0b0;
  background: #fff;
}
```
